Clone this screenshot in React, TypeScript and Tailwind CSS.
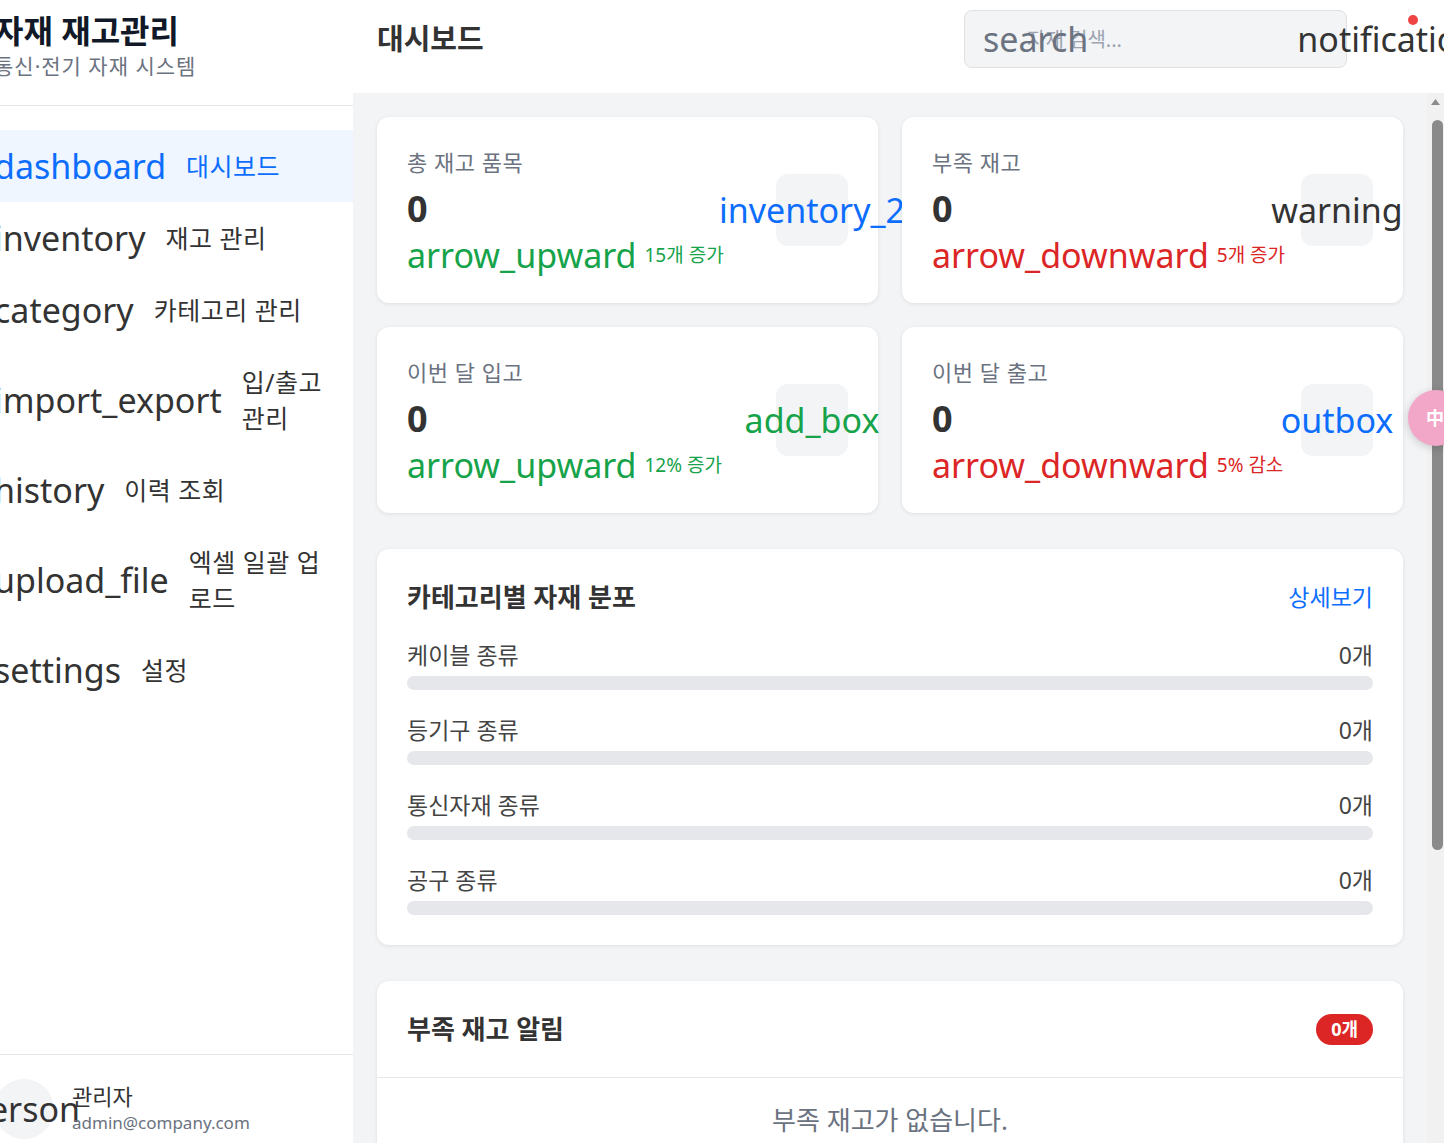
import React from 'react';

const FONT = "font-['Noto_Sans','Noto_Sans_CJK_KR',sans-serif]";

const navItems: { icon: string; label: string[]; active?: boolean }[] = [
  { icon: 'dashboard', label: ['대시보드'], active: true },
  { icon: 'inventory', label: ['재고 관리'] },
  { icon: 'category', label: ['카테고리 관리'] },
  { icon: 'import_export', label: ['입/출고', '관리'] },
  { icon: 'history', label: ['이력 조회'] },
  { icon: 'upload_file', label: ['엑셀 일괄 업', '로드'] },
  { icon: 'settings', label: ['설정'] },
];

type Stat = {
  label: string;
  trendIcon: string;
  trendText: string;
  up: boolean;
  icon: string;
  iconColor: string;
};

const stats: Stat[] = [
  { label: '총 재고 품목', trendIcon: 'arrow_upward', trendText: '15개 증가', up: true, icon: 'inventory_2', iconColor: 'text-[#0d6efd]' },
  { label: '부족 재고', trendIcon: 'arrow_downward', trendText: '5개 증가', up: false, icon: 'warning', iconColor: 'text-[#333333]' },
  { label: '이번 달 입고', trendIcon: 'arrow_upward', trendText: '12% 증가', up: true, icon: 'add_box', iconColor: 'text-[#16a34a]' },
  { label: '이번 달 출고', trendIcon: 'arrow_downward', trendText: '5% 감소', up: false, icon: 'outbox', iconColor: 'text-[#0d6efd]' },
];

const categories = ['케이블 종류', '등기구 종류', '통신자재 종류', '공구 종류'];

function StatCard({ s }: { s: Stat }) {
  const trendColor = s.up ? 'text-[#16a34a]' : 'text-[#dc2626]';
  return (
    <div className="bg-white rounded-[12px] shadow-[0_1px_4px_rgba(0,0,0,0.09)] p-[30px] flex items-center justify-between">
      <div className="flex flex-col">
        <div className="text-[22px] leading-[30px] tracking-[0.5px] text-[#6b7280] whitespace-nowrap">{s.label}</div>
        <div className="mt-[8px] text-[36px] leading-[48px] font-bold text-[#333333]">0</div>
        <div className={`mt-[4px] flex items-center gap-[8px] ${trendColor}`}>
          <span className="text-[34px] leading-[36px] whitespace-nowrap">{s.trendIcon}</span>
          <span className="text-[19px] leading-[24px] whitespace-nowrap">{s.trendText}</span>
        </div>
      </div>
      <div className="w-[72px] h-[72px] shrink-0 rounded-[12px] bg-[#f3f4f6] flex items-center justify-center">
        <span className={`text-[34px] leading-[36px] whitespace-nowrap ${s.iconColor}`}>{s.icon}</span>
      </div>
    </div>
  );
}

export default function App() {
  return (
    <div className={`relative flex w-full h-[1143px] overflow-hidden bg-[#f3f4f6] ${FONT}`}>
      {/* Sidebar */}
      <aside className="w-[353px] shrink-0 bg-white overflow-hidden">
        <div className="-ml-[30px] w-[383px] flex flex-col">
          <div className="px-[24px] pt-[14px] pb-[25px] border-b border-[#e5e7eb]">
            <div className="text-[32px] leading-[34px] font-bold text-[#111827] whitespace-nowrap">자재 재고관리</div>
            <div className="mt-[4px] text-[21px] leading-[28px] tracking-[1px] text-[#6b7280] whitespace-nowrap">통신·전기 자재 시스템</div>
          </div>
          <nav className="h-[948px] pt-[24px] flex flex-col">
            {navItems.map((n) => (
              <div
                key={n.icon}
                className={`flex items-center gap-[20px] px-[24px] py-[18px] ${
                  n.active ? 'bg-[#eff6ff] text-[#0d6efd]' : 'text-[#333333]'
                }`}
              >
                <span className="shrink-0 text-[34px] leading-[36px] whitespace-nowrap">{n.icon}</span>
                <span className="text-[25px] leading-[36px] tracking-[0.5px] whitespace-nowrap">
                  {n.label.map((l, i) => (
                    <React.Fragment key={i}>
                      {i > 0 && <br />}
                      {l}
                    </React.Fragment>
                  ))}
                </span>
              </div>
            ))}
          </nav>
          <div className="border-t border-[#e5e7eb] px-[24px] pt-[24px] pb-[24px] flex items-center gap-[18px]">
            <div className="w-[60px] h-[60px] shrink-0 rounded-full bg-[#f3f4f6] flex items-center justify-center">
              <span className="text-[34px] leading-[36px] text-[#333333] whitespace-nowrap">person</span>
            </div>
            <div className="flex flex-col">
              <span className="text-[22px] leading-[28px] text-[#333333]">관리자</span>
              <span className="text-[17px] leading-[26px] text-[#6b7280]">admin@company.com</span>
            </div>
          </div>
        </div>
      </aside>

      {/* Main */}
      <div className="flex-1 min-w-0 flex flex-col">
        <header className="h-[93px] shrink-0 bg-white flex items-start justify-between px-[24px] pt-[10px]">
          <div className="h-[58px] flex items-center">
            <h1 className="text-[29px] font-bold text-[#333333]">대시보드</h1>
          </div>
          <div className="flex items-start gap-[25px]">
            <div className="relative w-[383px] h-[58px]">
              <input
                className="w-full h-full rounded-[8px] border border-[#e0e0e0] bg-[#f3f4f6] pl-[62px] text-[20px] text-[#333333] placeholder:text-[#9ca3af] outline-none"
                placeholder="자재 검색..."
              />
              <span className="pointer-events-none absolute left-[19px] top-[11px] text-[34px] leading-[36px] text-[#6b7280] whitespace-nowrap">
                search
              </span>
            </div>
            <div className="relative mt-[11px] w-[48px] h-[36px] flex items-center justify-center">
              <span className="text-[34px] leading-[36px] text-[#333333] whitespace-nowrap">notifications</span>
              <span className="absolute -top-[6px] right-[2px] w-[10px] h-[10px] rounded-full bg-[#ef4444]" />
            </div>
          </div>
        </header>

        <div className="flex flex-1 min-h-0">
          <main className="flex-1 min-w-0 overflow-hidden p-[24px]">
            <div className="grid grid-cols-2 gap-[24px]">
              {stats.map((s) => (
                <StatCard key={s.label} s={s} />
              ))}
            </div>

            <section className="mt-[36px] bg-white rounded-[12px] shadow-[0_1px_4px_rgba(0,0,0,0.09)] p-[30px]">
              <div className="flex items-center justify-between">
                <h2 className="text-[26px] leading-[36px] font-bold text-[#333333]">카테고리별 자재 분포</h2>
                <span className="text-[23px] text-[#0d6efd]">상세보기</span>
              </div>
              {categories.map((c) => (
                <div key={c} className="mt-[25px]">
                  <div className="flex items-center justify-between text-[23px] leading-[30px] text-[#444444]">
                    <span>{c}</span>
                    <span>0개</span>
                  </div>
                  <div className="mt-[6px] h-[14px] rounded-full bg-[#e5e7eb]" />
                </div>
              ))}
            </section>

            <section className="mt-[36px] bg-white rounded-[12px] shadow-[0_1px_4px_rgba(0,0,0,0.09)]">
              <div className="flex items-center justify-between p-[30px] border-b border-[#e5e7eb]">
                <h2 className="text-[26px] leading-[36px] font-bold text-[#333333]">부족 재고 알림</h2>
                <span className="rounded-full bg-[#dc2626] px-[15px] text-[18px] leading-[31px] font-bold text-white">0개</span>
              </div>
              <div className="pt-[24px] pb-[24px] text-center text-[26px] leading-[36px] text-[#6b7280]">
                부족 재고가 없습니다.
              </div>
            </section>
          </main>

          {/* Scrollbar */}
          <div className="w-[17px] shrink-0 bg-[#f1f1f1] flex flex-col items-center">
            <div className="h-[17px] w-full flex items-center justify-center">
              <svg width="9" height="6" viewBox="0 0 9 6">
                <path d="M4.5 0 L9 6 L0 6 Z" fill="#8a8a8a" />
              </svg>
            </div>
            <div className="mt-[10px] ml-[4px] h-[730px] w-[11px] rounded-full bg-[#8a8a8a]" />
          </div>
        </div>
      </div>

      {/* Floating widget */}
      <div className="absolute left-[1408px] top-[390px] w-[56px] h-[56px] rounded-full bg-[#f2a7c9] shadow-[0_2px_8px_rgba(0,0,0,0.18)] flex items-center pl-[18px] text-white text-[18px] font-bold whitespace-nowrap">
        中/A
      </div>
    </div>
  );
}
